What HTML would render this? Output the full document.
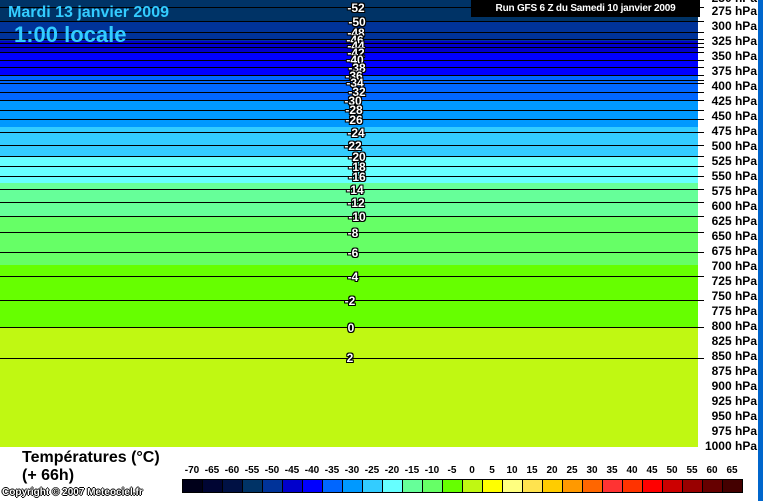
<!DOCTYPE html>
<html><head><meta charset="utf-8"><style>
body{margin:0;width:764px;height:501px;overflow:hidden;background:#fff;font-family:"Liberation Sans",Arial,sans-serif;position:relative}
.b{position:absolute;left:0;width:698px}
.l{position:absolute;left:0;width:704px;height:1px;background:#000}
.t{position:absolute;width:40px;margin-left:-20px;text-align:center;color:#fff;font-weight:bold;font-size:12px;line-height:12px;text-shadow:1px 0 #000,-1px 0 #000,0 1px #000,0 -1px #000,1px 1px #000,-1px -1px #000,1px -1px #000,-1px 1px #000}
.p{position:absolute;right:7px;font-weight:bold;font-size:12px;line-height:12px;color:#000;white-space:nowrap}
.c{position:absolute;top:479px;height:14px;border:1px solid #000;box-sizing:border-box}
.cl{position:absolute;top:466px;width:30px;margin-left:-15px;text-align:center;font-weight:bold;font-size:10px;line-height:10px}
</style></head><body>
<div class="b" style="top:0;height:21px;background:#003366"></div>
<div class="b" style="top:21px;height:20px;background:#003399"></div>
<div class="b" style="top:41px;height:11px;background:#0000cc"></div>
<div class="b" style="top:52px;height:23px;background:#0000ff"></div>
<div class="b" style="top:75px;height:25px;background:#0066ff"></div>
<div class="b" style="top:100px;height:27px;background:#0099ff"></div>
<div class="b" style="top:127px;height:29px;background:#33ccff"></div>
<div class="b" style="top:156px;height:27px;background:#66ffff"></div>
<div class="b" style="top:183px;height:33px;background:#66ff99"></div>
<div class="b" style="top:216px;height:49px;background:#66ff66"></div>
<div class="b" style="top:265px;height:62px;background:#66ff00"></div>
<div class="b" style="top:327px;height:120px;background:#c0f812"></div>

<div class="l" style="top:7px"></div><div class="l" style="top:21px"></div><div class="l" style="top:32px"></div><div class="l" style="top:39px"></div><div class="l" style="top:43px"></div><div class="l" style="top:47px"></div><div class="l" style="top:52px"></div><div class="l" style="top:60px"></div><div class="l" style="top:67px"></div><div class="l" style="top:75px"></div><div class="l" style="top:80px"></div><div class="l" style="top:83px"></div><div class="l" style="top:92px"></div><div class="l" style="top:100px"></div><div class="l" style="top:110px"></div><div class="l" style="top:119px"></div><div class="l" style="top:132px"></div><div class="l" style="top:145px"></div><div class="l" style="top:156px"></div><div class="l" style="top:166px"></div><div class="l" style="top:176px"></div><div class="l" style="top:189px"></div><div class="l" style="top:202px"></div><div class="l" style="top:216px"></div><div class="l" style="top:232px"></div><div class="l" style="top:252px"></div><div class="l" style="top:276px"></div><div class="l" style="top:300px"></div><div class="l" style="top:327px"></div><div class="l" style="top:358px"></div>

<div class="t" style="left:356px;top:2px">-52</div>
<div class="t" style="left:357px;top:16px">-50</div>
<div class="t" style="left:356px;top:27px">-48</div>
<div class="t" style="left:355px;top:34px">-46</div>
<div class="t" style="left:356px;top:40px">-44</div>
<div class="t" style="left:356px;top:47px">-42</div>
<div class="t" style="left:355px;top:54px">-40</div>
<div class="t" style="left:357px;top:62px">-38</div>
<div class="t" style="left:354px;top:70px">-36</div>
<div class="t" style="left:355px;top:77px">-34</div>
<div class="t" style="left:357px;top:86px">-32</div>
<div class="t" style="left:353px;top:95px">-30</div>
<div class="t" style="left:354px;top:104px">-28</div>
<div class="t" style="left:354px;top:114px">-26</div>
<div class="t" style="left:356px;top:127px">-24</div>
<div class="t" style="left:353px;top:140px">-22</div>
<div class="t" style="left:357px;top:151px">-20</div>
<div class="t" style="left:357px;top:161px">-18</div>
<div class="t" style="left:357px;top:171px">-16</div>
<div class="t" style="left:355px;top:184px">-14</div>
<div class="t" style="left:356px;top:197px">-12</div>
<div class="t" style="left:357px;top:211px">-10</div>
<div class="t" style="left:353px;top:227px">-8</div>
<div class="t" style="left:353px;top:247px">-6</div>
<div class="t" style="left:353px;top:271px">-4</div>
<div class="t" style="left:350px;top:295px">-2</div>
<div class="t" style="left:351px;top:322px">0</div>
<div class="t" style="left:350px;top:352px">2</div>

<div style="position:absolute;left:8px;top:4px;color:#33ccff;font-weight:bold;font-size:16px;line-height:18px">Mardi 13 janvier 2009</div>
<div style="position:absolute;left:14px;top:23px;color:#33ccff;font-weight:bold;font-size:22px;line-height:24px">1:00 locale</div>
<div style="position:absolute;left:471px;top:0;width:229px;height:17px;background:#000;color:#fff;font-weight:bold;font-size:10px;line-height:17px;text-align:center;letter-spacing:-0.2px">Run GFS 6 Z du Samedi 10 janvier 2009</div>

<div class="p" style="top:-8px">250 hPa</div>
<div class="p" style="top:5px">275 hPa</div><div class="p" style="top:20px">300 hPa</div><div class="p" style="top:35px">325 hPa</div><div class="p" style="top:50px">350 hPa</div><div class="p" style="top:65px">375 hPa</div><div class="p" style="top:80px">400 hPa</div><div class="p" style="top:95px">425 hPa</div><div class="p" style="top:110px">450 hPa</div><div class="p" style="top:125px">475 hPa</div><div class="p" style="top:140px">500 hPa</div><div class="p" style="top:155px">525 hPa</div><div class="p" style="top:170px">550 hPa</div><div class="p" style="top:185px">575 hPa</div><div class="p" style="top:200px">600 hPa</div><div class="p" style="top:215px">625 hPa</div><div class="p" style="top:230px">650 hPa</div><div class="p" style="top:245px">675 hPa</div><div class="p" style="top:260px">700 hPa</div><div class="p" style="top:275px">725 hPa</div><div class="p" style="top:290px">750 hPa</div><div class="p" style="top:305px">775 hPa</div><div class="p" style="top:320px">800 hPa</div><div class="p" style="top:335px">825 hPa</div><div class="p" style="top:350px">850 hPa</div><div class="p" style="top:365px">875 hPa</div><div class="p" style="top:380px">900 hPa</div><div class="p" style="top:395px">925 hPa</div><div class="p" style="top:410px">950 hPa</div><div class="p" style="top:425px">975 hPa</div><div class="p" style="top:440px">1000 hPa</div>
<div style="position:absolute;left:758px;top:0;width:5px;height:501px;background:#0066cc"></div>

<div style="position:absolute;left:22px;top:449px;font-weight:bold;font-size:16px;line-height:18px">Températures (°C)<br>(+ 66h)</div>
<div style="position:absolute;left:2px;top:487px;font-weight:bold;font-size:10px;line-height:11px;color:#fff;text-shadow:1px 0 #000,-1px 0 #000,0 1px #000,0 -1px #000">Copyright © 2007 Meteociel.fr</div>

<div id="cb"></div>
<script>
var cols=["#00001a","#000533","#001144","#003366","#003399","#0000cc","#0000ff","#0066ff","#0099ff","#33ccff","#66ffff","#66ff99","#66ff66","#66ff00","#c0f812","#ffff00","#ffff80","#ffe34f","#ffcc00","#ff9900","#ff6600","#ff3333","#ff3300","#ff0000","#cc0000","#990000","#660000","#440000"];
var h="";for(var i=0;i<28;i++){var x=182+i*20;h+='<div class="c" style="left:'+x+'px;width:21px;background:'+cols[i]+'"></div><div class="cl" style="left:'+(x+10)+'px">'+(-70+5*i)+'</div>';}
document.getElementById("cb").innerHTML=h;
</script>
</body></html>
